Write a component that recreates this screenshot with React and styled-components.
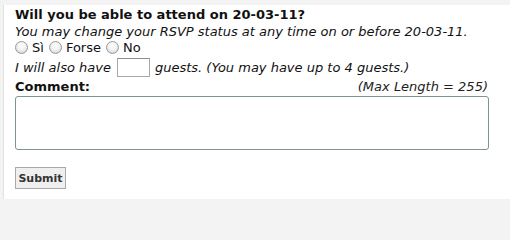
import styled, { createGlobalStyle } from 'styled-components';

const GlobalStyle = createGlobalStyle`
  html, body {
    margin: 0;
    padding: 0;
    background: #f3f3f3;
  }
  body {
    font-family: 'DejaVu Sans', Verdana, sans-serif;
    color: #111;
  }
`;

const Panel = styled.form`
  margin: 5px 0 0 3px;
  height: 194px;
  box-sizing: border-box;
  padding: 1px 22px 0 11px;
  background: #fff;
  border-left: 1px solid #e2e2e2;
  display: flex;
  flex-direction: column;
`;

const Title = styled.h3`
  margin: 0;
  font-size: 13px;
  font-weight: bold;
  line-height: 18px;
`;

const Note = styled.p`
  margin: 0;
  font-size: 13px;
  font-style: italic;
  line-height: 16px;
`;

const RadioRow = styled.div`
  display: flex;
  align-items: center;
  height: 15px;
  font-size: 13px;
`;

const Choice = styled.label`
  display: flex;
  align-items: center;
  gap: 4px;
  margin-right: 5px;
`;

const Radio = styled.input.attrs({ type: 'radio' })`
  appearance: none;
  margin: 0;
  width: 13px;
  height: 13px;
  border-radius: 50%;
  border: 1px solid #9a9a9a;
  box-sizing: border-box;
  background: radial-gradient(circle at 50% 35%, #fff 0%, #f2f2f2 45%, #c9c9c9 100%);
`;

const GuestRow = styled.div`
  display: flex;
  align-items: center;
  margin-top: 2px;
  height: 20px;
  font-size: 13px;
  font-style: italic;
  gap: 5px;
`;

const GuestInput = styled.input`
  width: 33px;
  height: 19px;
  box-sizing: border-box;
  margin: 0 0 0 1px;
  border: 1px solid #a9a9a9;
  border-top-color: #8e8e8e;
  font-size: 12px;
`;

const CommentHead = styled.div`
  display: flex;
  justify-content: space-between;
  align-items: center;
  height: 17px;
  margin-top: 1px;
  font-size: 13px;
`;

const Label = styled.span`
  font-weight: bold;
`;

const Limit = styled.span`
  font-style: italic;
  color: #222;
`;

const Comment = styled.textarea`
  margin-top: 1px;
  width: 474px;
  height: 54px;
  box-sizing: border-box;
  border: 1px solid #7f9393;
  border-radius: 3px;
  resize: none;
  font-family: inherit;
`;

const Submit = styled.button`
  align-self: flex-start;
  margin-top: 17px;
  width: 51px;
  height: 22px;
  padding: 0;
  font-family: 'DejaVu Sans', Verdana, sans-serif;
  font-size: 11px;
  font-weight: bold;
  color: #333;
  background: #efefef;
  border: 1px solid #aaa;
  border-radius: 0;
`;

export default function App() {
  return (
    <>
      <GlobalStyle />
      <Panel onSubmit={(e) => e.preventDefault()}>
        <Title>Will you be able to attend on 20-03-11?</Title>
        <Note>You may change your RSVP status at any time on or before 20-03-11.</Note>
        <RadioRow>
          <Choice>
            <Radio name="rsvp" value="yes" />
            Sì
          </Choice>
          <Choice>
            <Radio name="rsvp" value="maybe" />
            Forse
          </Choice>
          <Choice>
            <Radio name="rsvp" value="no" />
            No
          </Choice>
        </RadioRow>
        <GuestRow>
          I will also have
          <GuestInput type="text" />
          guests. (You may have up to 4 guests.)
        </GuestRow>
        <CommentHead>
          <Label>Comment:</Label>
          <Limit>(Max Length = 255)</Limit>
        </CommentHead>
        <Comment />
        <Submit type="submit">Submit</Submit>
      </Panel>
    </>
  );
}
